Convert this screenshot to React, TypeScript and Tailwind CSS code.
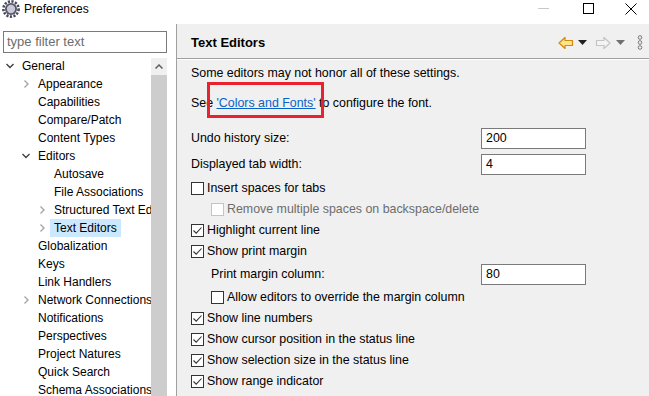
import React from 'react';

type Node = {
  label: string;
  level: number;
  arrow?: 'open' | 'closed';
  selected?: boolean;
};

const tree: Node[] = [
  { label: 'General', level: 0, arrow: 'open' },
  { label: 'Appearance', level: 1, arrow: 'closed' },
  { label: 'Capabilities', level: 1 },
  { label: 'Compare/Patch', level: 1 },
  { label: 'Content Types', level: 1 },
  { label: 'Editors', level: 1, arrow: 'open' },
  { label: 'Autosave', level: 2 },
  { label: 'File Associations', level: 2 },
  { label: 'Structured Text Editors', level: 2, arrow: 'closed' },
  { label: 'Text Editors', level: 2, arrow: 'closed', selected: true },
  { label: 'Globalization', level: 1 },
  { label: 'Keys', level: 1 },
  { label: 'Link Handlers', level: 1 },
  { label: 'Network Connections', level: 1, arrow: 'closed' },
  { label: 'Notifications', level: 1 },
  { label: 'Perspectives', level: 1 },
  { label: 'Project Natures', level: 1 },
  { label: 'Quick Search', level: 1 },
  { label: 'Schema Associations', level: 1 },
];

const indent = ['pl-[2px]', 'pl-[18px]', 'pl-[34px]'];

const Chevron = ({ kind }: { kind?: 'open' | 'closed' }) => {
  if (!kind) return <span className="w-[16px] shrink-0" />;
  return (
    <span className="w-[16px] h-[18px] shrink-0 flex items-center justify-center">
      {kind === 'open' ? (
        <svg width="10" height="10" viewBox="0 0 10 10">
          <path d="M1.5 3 L5 6.5 L8.5 3" fill="none" stroke="#404040" strokeWidth="1.4" />
        </svg>
      ) : (
        <svg width="10" height="10" viewBox="0 0 10 10">
          <path d="M3.5 1.5 L7 5 L3.5 8.5" fill="none" stroke="#a6a6a6" strokeWidth="1.4" />
        </svg>
      )}
    </span>
  );
};

const Check = ({ checked, disabled }: { checked?: boolean; disabled?: boolean }) => (
  <span
    className={`w-[13px] h-[13px] shrink-0 border bg-white flex items-center justify-center ${
      disabled ? 'border-[#c4c4c4]' : 'border-[#333333]'
    }`}
  >
    {checked && (
      <svg width="11" height="11" viewBox="0 0 11 11">
        <path d="M1.5 5.5 L4.2 8.2 L9.5 2.5" fill="none" stroke="#333333" strokeWidth="1.1" />
      </svg>
    )}
  </span>
);

const CheckRow = ({
  label,
  checked,
  disabled,
  inset,
}: {
  label: string;
  checked?: boolean;
  disabled?: boolean;
  inset?: boolean;
}) => (
  <div className={`h-[21px] flex items-center gap-[3px] ${inset ? 'pl-[20px]' : ''}`}>
    <Check checked={checked} disabled={disabled} />
    <span className={disabled ? 'text-[#6d6d6d]' : 'text-black'}>{label}</span>
  </div>
);

const FieldRow = ({ label, value, inset }: { label: string; value: string; inset?: boolean }) => (
  <div className="h-[21px] flex items-center">
    <span className={`shrink-0 ${inset ? 'w-[290px] pl-[20px]' : 'w-[290px]'}`}>{label}</span>
    <div className="w-[105px] h-[21px] border border-[#7a7a7a] bg-white px-[4px] flex items-center">
      {value}
    </div>
  </div>
);

const BlockArrow = ({ dir, stroke, fill }: { dir: 'left' | 'right'; stroke: string; fill: string }) => (
  <svg width="16" height="14" viewBox="0 0 16 14" style={{ transform: dir === 'right' ? 'scaleX(-1)' : undefined }}>
    <path d="M1 7 L7 1.5 L7 4.5 L14.5 4.5 L14.5 9.5 L7 9.5 L7 12.5 Z" fill={fill} stroke={stroke} strokeWidth="1.2" strokeLinejoin="round" />
  </svg>
);

const Caret = ({ color }: { color: string }) => (
  <svg width="9" height="5" viewBox="0 0 9 5">
    <path d="M0 0 L9 0 L4.5 5 Z" fill={color} />
  </svg>
);

export default function App() {
  return (
    <div
      className="w-[649px] h-[396px] overflow-hidden bg-white flex flex-col text-[12px] text-black"
      style={{ fontFamily: '"Liberation Sans", "Noto Sans", Arial, sans-serif' }}
    >
      {/* title bar */}
      <div className="h-[24px] shrink-0 flex items-start">
        <svg width="18" height="18" viewBox="0 0 18 18" className="ml-[2px]">
          <circle cx="9" cy="9" r="7.6" fill="none" stroke="#4a4a5c" strokeWidth="2.6" strokeDasharray="2.2 1.4" />
          <circle cx="9" cy="9" r="6" fill="#55546a" />
          <circle cx="9" cy="9" r="4.2" fill="#c9c8d6" />
        </svg>
        <span className="ml-[4px] text-[12px] leading-[18px]">Preferences</span>
        <div className="ml-auto flex items-start pr-[11px] pt-[3px]">
          <div className="w-[11px] h-px bg-[#c8c8c8] mt-[5px]" />
          <div className="ml-[34px] w-[11px] h-[11px] border border-black" />
          <svg width="14" height="12" viewBox="0 0 14 12" className="ml-[30px]">
            <path d="M1.5 0.5 L12.5 11.5 M12.5 0.5 L1.5 11.5" stroke="#000" strokeWidth="1" />
          </svg>
        </div>
      </div>

      <div className="flex flex-1 min-h-0">
        {/* left navigation */}
        <div className="w-[177px] shrink-0 flex flex-col border-r border-[#a0a0a0]">
          <div className="pt-[7px] pl-[3px]">
            <div className="w-[164px] h-[22px] border border-[#7a7a7a] px-[3px] flex items-center text-[#6d6d6d] text-[13px]">
              type filter text
            </div>
          </div>
          <div className="flex mt-[4px] flex-1 min-h-0">
            <div className="w-[151px] shrink-0 overflow-hidden">
              {tree.map((n) => (
                <div key={n.label} className={`h-[18px] flex items-center whitespace-nowrap ${indent[n.level]}`}>
                  <Chevron kind={n.arrow} />
                  <span className={`pl-[4px] pr-[4px] h-[18px] leading-[18px] ${n.selected ? 'bg-[#cce8ff]' : ''}`}>
                    {n.label}
                  </span>
                </div>
              ))}
            </div>
            <div className="w-[16px] shrink-0 flex flex-col mt-[1px]">
              <div className="h-[17px] bg-[#f0f0f0] flex items-center justify-center">
                <svg width="8" height="5" viewBox="0 0 8 5">
                  <path d="M0.5 4.5 L4 1 L7.5 4.5" fill="none" stroke="#606060" strokeWidth="1.5" />
                </svg>
              </div>
              <div className="flex-1 bg-[#cdcdcd]" />
            </div>
          </div>
        </div>

        {/* right page */}
        <div className="flex-1 bg-[#f0f0f0] flex flex-col text-[12.4px]">
          <div className="h-[35px] shrink-0 flex items-center pt-[3px] pl-[14px] pr-[6px] border-b border-[#a0a0a0]">
            <span className="font-bold text-[13px]">Text Editors</span>
            <div className="ml-auto flex items-center">
              <BlockArrow dir="left" stroke="#d08a10" fill="#ffe28a" />
              <span className="ml-[4px]"><Caret color="#202020" /></span>
              <span className="ml-[8px]"><BlockArrow dir="right" stroke="#c4c4c4" fill="#f4f4f4" /></span>
              <span className="ml-[5px]"><Caret color="#707070" /></span>
              <svg width="6" height="15" viewBox="0 0 6 15" className="ml-[12px]">
                <circle cx="3" cy="2.5" r="1.8" fill="none" stroke="#777" strokeWidth="1" />
                <circle cx="3" cy="7.5" r="1.8" fill="none" stroke="#777" strokeWidth="1" />
                <circle cx="3" cy="12.5" r="1.8" fill="none" stroke="#777" strokeWidth="1" />
              </svg>
            </div>
          </div>
          <div className="border-t border-white" />

          <div className="pl-[14px] pt-[4px] flex flex-col">
            <div className="h-[18px] flex items-center">Some editors may not honor all of these settings.</div>
            <div className="h-[18px] mt-[12px] flex items-center">
              <span>See&nbsp;</span>
              <span className="relative">
                <span className="text-[#0a62c8] underline">'Colors and Fonts'</span>
                <span className="absolute left-[-10px] right-[-8px] top-[-12px] bottom-[-6px] border-[3px] border-[#e8222f]" />
              </span>
              <span>&nbsp;to configure the font.</span>
            </div>
            <div className="mt-[16px] flex flex-col gap-[5px]">
              <FieldRow label="Undo history size:" value="200" />
              <FieldRow label="Displayed tab width:" value="4" />
            </div>
            <div className="mt-[3px]">
              <CheckRow label="Insert spaces for tabs" />
              <CheckRow label="Remove multiple spaces on backspace/delete" disabled inset />
              <CheckRow label="Highlight current line" checked />
              <CheckRow label="Show print margin" checked />
            </div>
            <div className="mt-[2px]">
              <FieldRow label="Print margin column:" value="80" inset />
            </div>
            <div className="mt-[2px]">
              <CheckRow label="Allow editors to override the margin column" inset />
              <CheckRow label="Show line numbers" checked />
              <CheckRow label="Show cursor position in the status line" checked />
              <CheckRow label="Show selection size in the status line" checked />
              <CheckRow label="Show range indicator" checked />
            </div>
          </div>
        </div>
      </div>
    </div>
  );
}
